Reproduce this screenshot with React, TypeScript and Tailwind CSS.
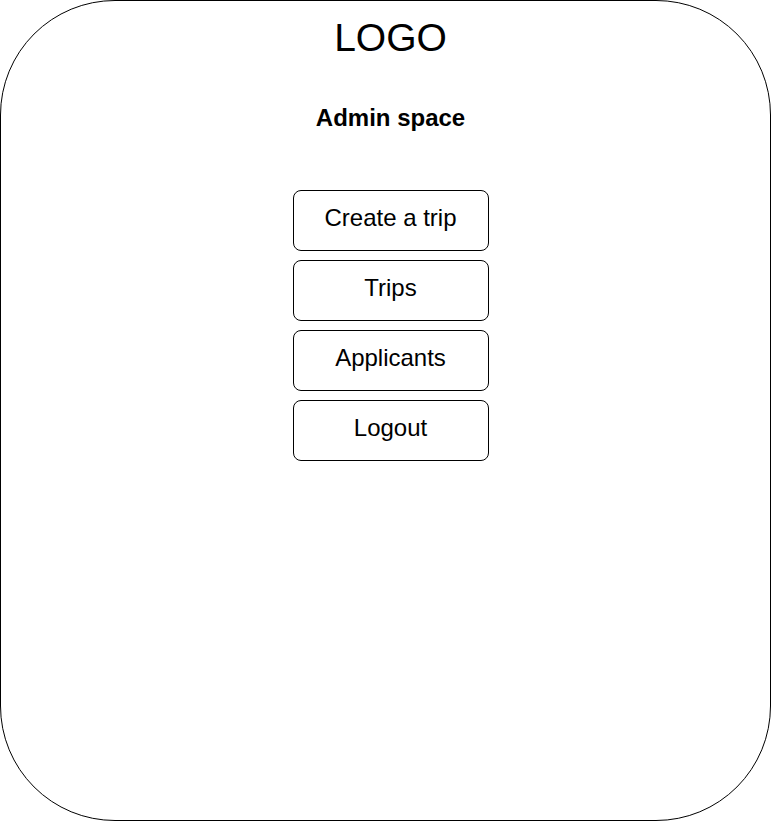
import React from 'react';

const items = ['Create a trip', 'Trips', 'Applicants', 'Logout'];

const App: React.FC = () => {
    return (
        <div className="w-[771px] h-[821px] bg-white" style={{ fontFamily: '"Liberation Sans", Arial, sans-serif' }}>
            <div className="w-[771px] h-[821px] border border-black rounded-[115px] flex flex-col items-center pl-[10px] text-black">
                <div className="text-[39px] leading-[48px] mt-[13px]">LOGO</div>
                <div className="text-[24px] font-bold leading-[28px] mt-[42px]">Admin space</div>
                <div className="flex flex-col gap-[9px] mt-[58px]">
                    {items.map((item) => (
                        <button
                            key={item}
                            className="w-[196px] h-[61px] border border-black rounded-[8px] text-[24px] leading-[28px] flex items-center justify-center pb-[5px]"
                        >
                            {item}
                        </button>
                    ))}
                </div>
            </div>
        </div>
    );
};

export default App;
